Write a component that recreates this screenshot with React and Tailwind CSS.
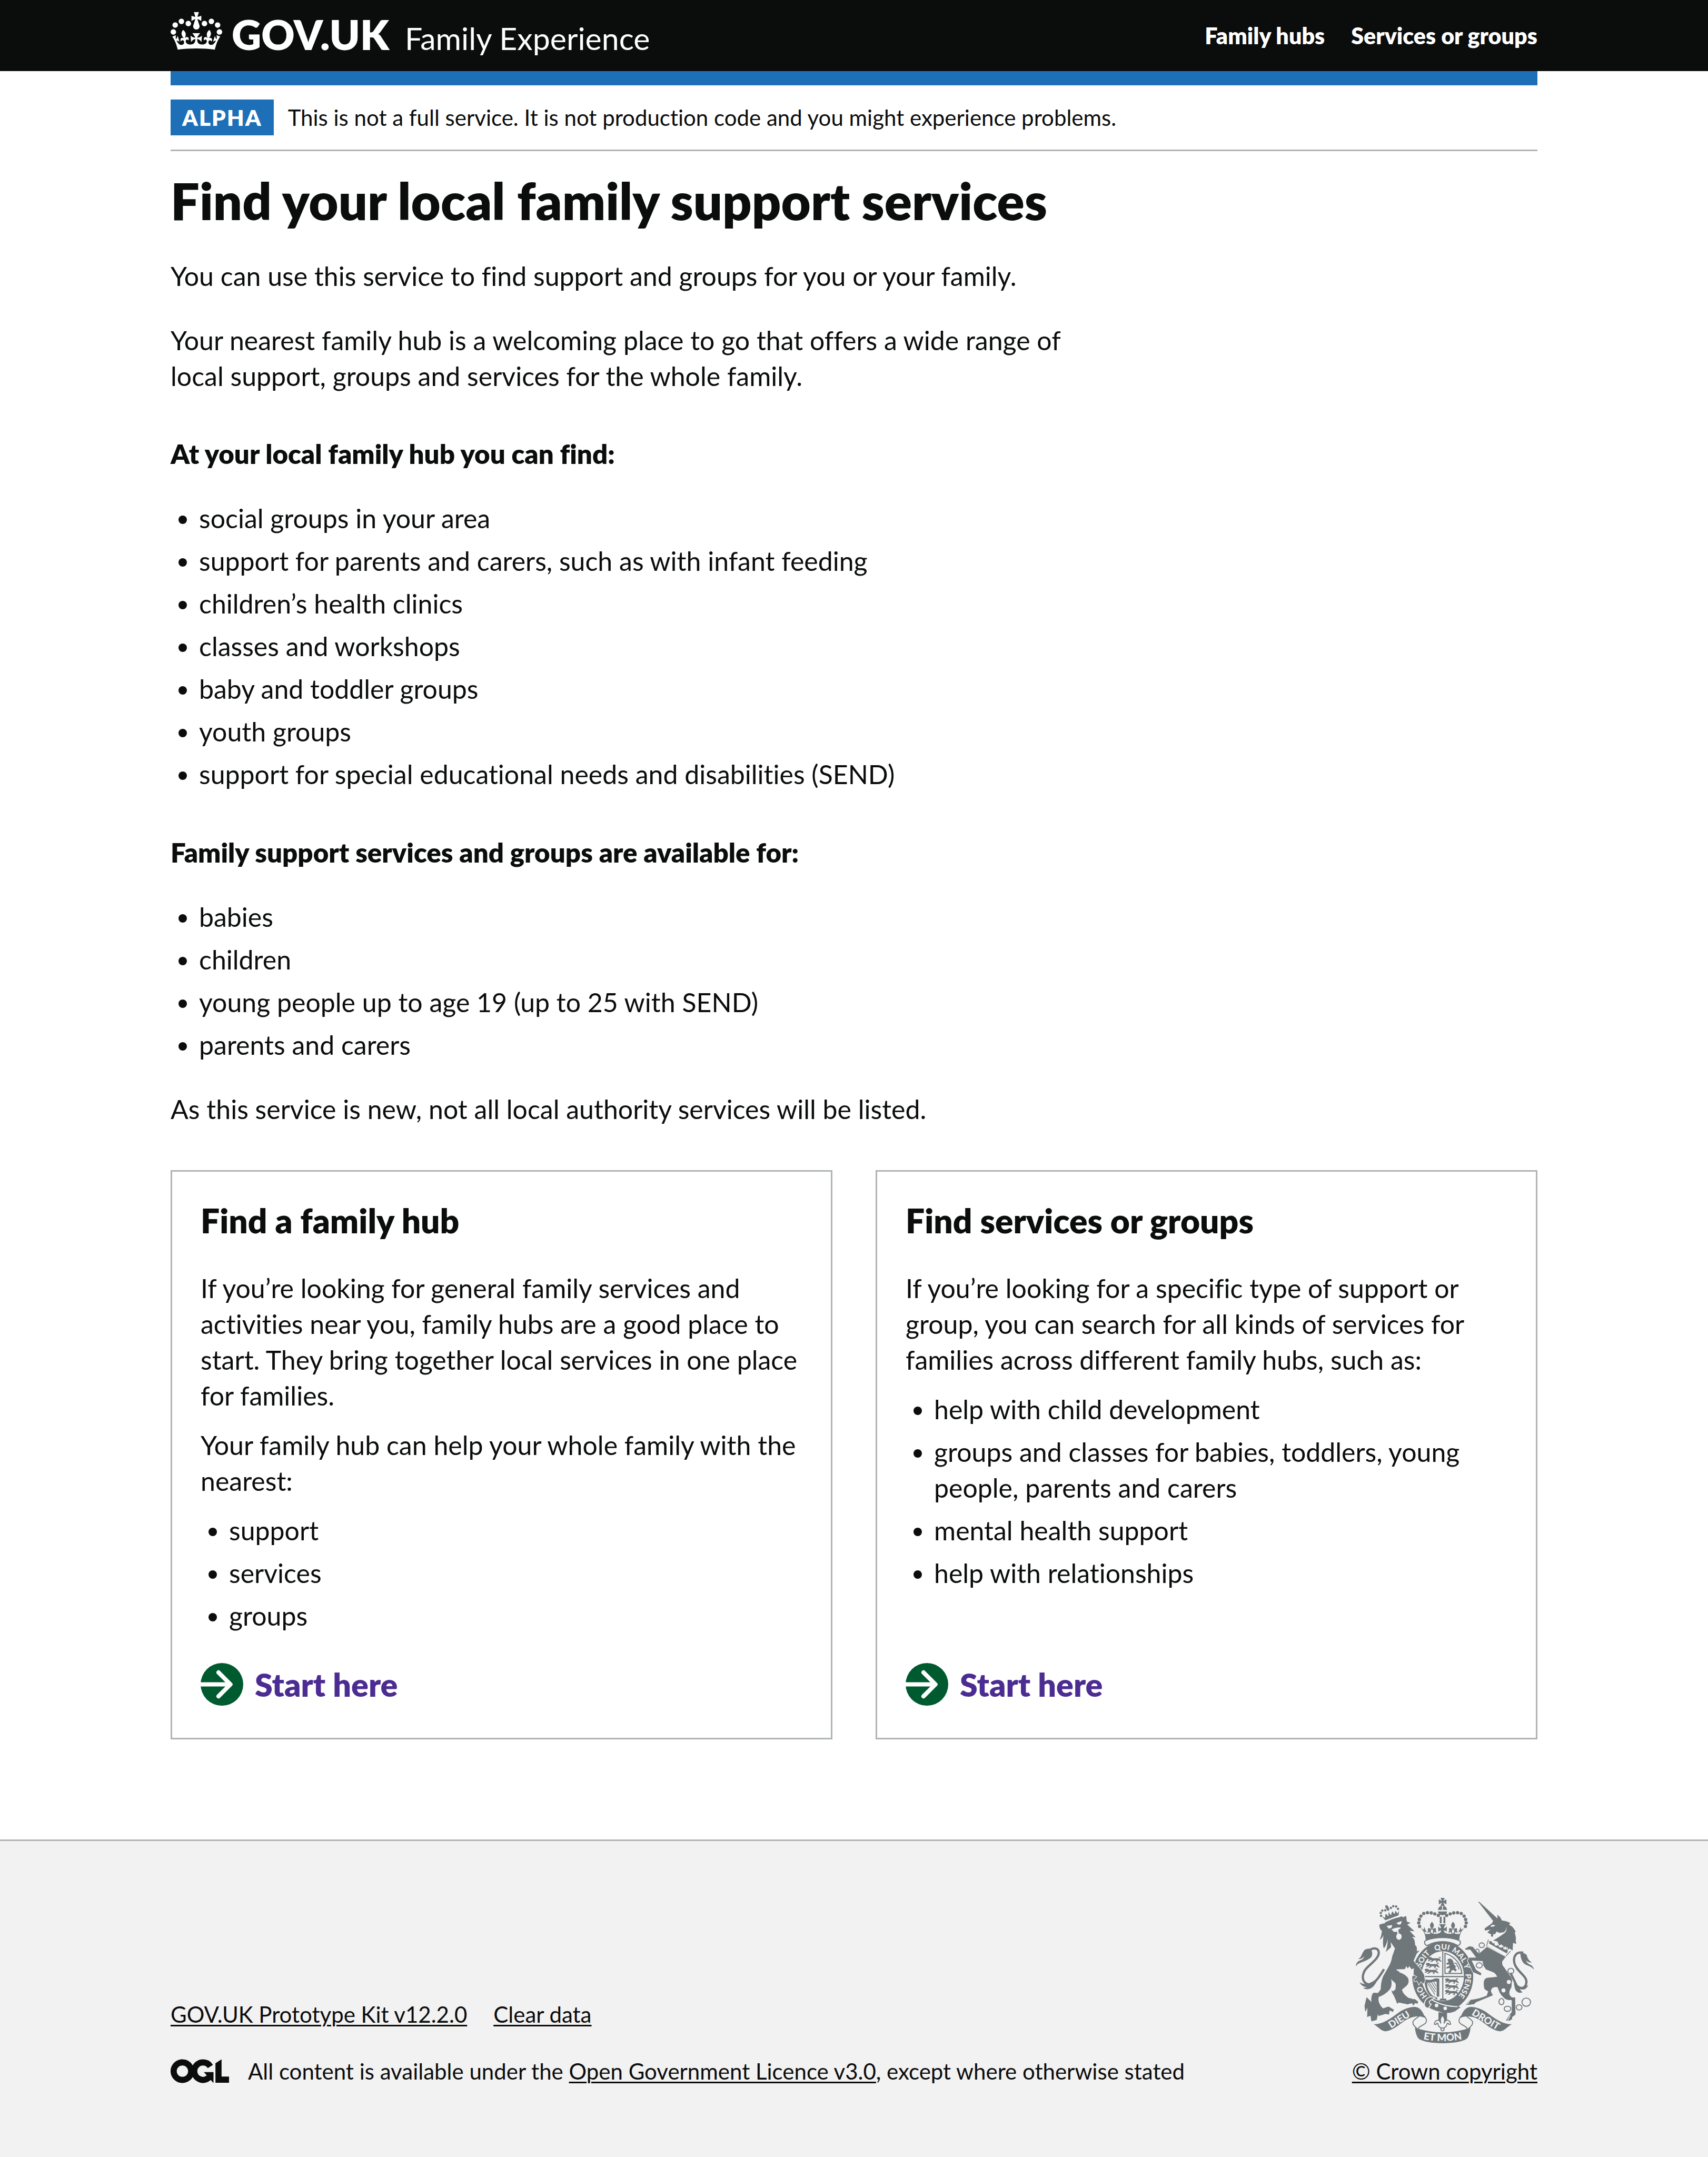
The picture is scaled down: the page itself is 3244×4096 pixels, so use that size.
const localHubItems = [
  "social groups in your area",
  "support for parents and carers, such as with infant feeding",
  "children’s health clinics",
  "classes and workshops",
  "baby and toddler groups",
  "youth groups",
  "support for special educational needs and disabilities (SEND)",
];

const audienceItems = [
  "babies",
  "children",
  "young people up to age 19 (up to 25 with SEND)",
  "parents and carers",
];

const cards = [
  {
    title: "Find a family hub",
    paragraphs: [
      "If you’re looking for general family services and activities near you, family hubs are a good place to start. They bring together local services in one place for families.",
      "Your family hub can help your whole family with the nearest:",
    ],
    items: ["support", "services", "groups"],
  },
  {
    title: "Find services or groups",
    paragraphs: [
      "If you’re looking for a specific type of support or group, you can search for all kinds of services for families across different family hubs, such as:",
    ],
    items: [
      "help with child development",
      "groups and classes for babies, toddlers, young people, parents and carers",
      "mental health support",
      "help with relationships",
    ],
  },
];

function Crown() {
  return (
    <svg viewBox="0 0 132 97" className="-mb-1 h-[72px] w-[98px] shrink-0" fill="currentColor" aria-hidden="true">
      <path
        fillRule="evenodd"
        d="M25 30.2c3.5 1.5 7.7-.2 9.1-3.7 1.5-3.6-.2-7.8-3.9-9.2-3.6-1.4-7.6.3-9.1 3.9-1.4 3.5.3 7.5 3.9 9zM9 39.5c3.6 1.5 7.8-.2 9.2-3.7 1.5-3.6-.2-7.8-3.9-9.1-3.6-1.5-7.6.2-9.1 3.8-1.4 3.5.3 7.5 3.8 9zM4.4 57.2c3.5 1.5 7.7-.2 9.1-3.8 1.5-3.6-.2-7.7-3.9-9.1-3.5-1.5-7.6.3-9.1 3.8-1.4 3.5.3 7.6 3.9 9.1zm38.3-21.4c3.5 1.5 7.7-.2 9.1-3.8 1.5-3.6-.2-7.7-3.9-9.1-3.6-1.5-7.6.3-9.1 3.8-1.3 3.6.4 7.7 3.9 9.1zm64.4-5.6c-3.6 1.5-7.8-.2-9.1-3.7-1.5-3.6.2-7.8 3.8-9.2 3.6-1.4 7.7.3 9.2 3.9 1.3 3.5-.4 7.5-3.9 9zm15.9 9.3c-3.6 1.5-7.7-.2-9.1-3.7-1.5-3.6.2-7.8 3.7-9.1 3.6-1.5 7.7.2 9.2 3.8 1.5 3.5-.3 7.5-3.8 9zm4.7 17.7c-3.6 1.5-7.8-.2-9.2-3.8-1.5-3.6.2-7.7 3.9-9.1 3.6-1.5 7.7.3 9.2 3.8 1.3 3.5-.4 7.6-3.9 9.1zM89.3 35.8c-3.6 1.5-7.8-.2-9.2-3.8-1.4-3.6.2-7.7 3.9-9.1 3.6-1.5 7.7.3 9.2 3.8 1.4 3.6-.3 7.7-3.9 9.1zM69.7 17.7l8.9 4.7V9.3l-8.9 2.8c-.2-.3-.5-.6-.9-.9L72.4 0H59.6l3.5 11.2c-.3.3-.6.5-.9.9l-8.8-2.8v13.1l8.8-4.7c.3.3.6.7.9.9l-5 15.4v.1c-.2.8-.4 1.6-.4 2.4 0 4.1 3.1 7.5 7 8.1h.2c.3 0 .7.1 1 .1.4 0 .7 0 1-.1h.2c4-.6 7.1-4.1 7.1-8.1 0-.8-.1-1.7-.4-2.4V34l-5.1-15.4c.4-.2.7-.6 1-.9zM66 92.8c16.9 0 32.8 1.1 47.1 3.2 4-16.9 8.9-26.7 14-33.5l-9.6-3.4c1 4.9 1.1 7.2 0 10.2-1.5-1.4-3-4.3-4.2-8.7L108.6 76c2.8-2 5-3.2 7.5-3.3-4.4 9.4-10 11.9-13.6 11.2-4.3-.8-6.3-4.6-5.6-7.9 1-4.7 5.7-5.9 8-.5 4.3-8.7-3-11.4-7.6-8.8 7.1-7.2 7.9-13.5 2.1-21.1-8 6.1-8.1 12.3-4.5 20.8-4.7-5.4-12.1-2.5-9.5 6.2 3.4-5.2 7.9-2 7.2 3.1-.6 4.3-6.4 7.8-13.5 7.2-10.3-.9-10.9-8-11.2-13.8 2.5-.5 7.1 1.8 11 7.3L80.2 60c-4.1 4.4-8 5.3-12.3 5.4 1.4-4.4 8-11.6 8-11.6H55.5s6.4 7.2 7.9 11.6c-4.2-.1-8-1-12.3-5.4l1.4 16.4c3.9-5.5 8.5-7.7 10.9-7.3-.3 5.8-.9 12.8-11.1 13.8-7.2.6-12.9-2.9-13.5-7.2-.7-5 3.8-8.3 7.1-3.1 2.7-8.7-4.6-11.6-9.4-6.2 3.7-8.5 3.6-14.7-4.6-20.8-5.8 7.6-5 13.9 2.2 21.1-4.7-2.6-11.9.1-7.7 8.8 2.3-5.5 7.1-4.2 8.1.5.7 3.3-1.3 7.1-5.7 7.9-3.5.7-9-1.8-13.5-11.2 2.5.1 4.7 1.3 7.5 3.3l-4.7-15.4c-1.2 4.4-2.7 7.2-4.3 8.7-1.1-3-.9-5.3 0-10.2l-9.5 3.4c5 6.9 9.9 16.7 14 33.5 14.8-2.1 30.8-3.2 47.7-3.2z"
      />
    </svg>
  );
}

function StartIcon() {
  return (
    <svg viewBox="0 0 30 30" className="size-[81px] shrink-0" aria-hidden="true">
      <circle cx="15" cy="15" r="15" fill="#005a30" />
      <path d="M0 15h20" fill="none" stroke="#fff" strokeWidth="3" />
      <path d="M12.6 6.6 21 15l-8.4 8.4" fill="none" stroke="#fff" strokeWidth="3" strokeLinecap="round" strokeLinejoin="round" />
    </svg>
  );
}

function OglLogo() {
  return (
    <svg viewBox="0 0 483.2 195.7" className="h-[46px] w-[111px] shrink-0" fill="currentColor" role="img" aria-label="Open Government Licence">
      <path d="M421.5 142.8V.1l-50.7 32.3v161.1h112.4v-50.7zm-122.3-9.6A47.12 47.12 0 0 1 221 97.8c0-26 21.1-47.1 47.1-47.1 16.7 0 31.4 8.7 39.7 21.8l42.7-27.2A97.63 97.63 0 0 0 268.1 0c-36.5 0-68.3 20.1-85.1 49.7A98 98 0 0 0 97.8 0C43.9 0 0 43.9 0 97.8s43.9 97.8 97.8 97.8c36.5 0 68.3-20.1 85.1-49.7a97.76 97.76 0 0 0 149.6 25.4l19.4 22.2h3v-87.8h-80l24.3 27.5zM97.8 145c-26 0-47.1-21.1-47.1-47.1s21.1-47.1 47.1-47.1 47.1 21.1 47.1 47.1S123.8 145 97.8 145" />
    </svg>
  );
}

const BG = "#f2f2f2";
const INK = "#6f777b";

const crownBeads = [
  [240, 183], [210, 170], [180, 162], [148, 160], [117, 167], [93, 189], [80, 217], [75, 246], [82, 276],
];

const lionBeads = [
  [235, 162], [248, 142], [273, 140], [320, 120], [340, 105], [364, 108], [380, 128], [237, 186],
];

const chainRings = [
  [1086, 434, 22, 20], [1049, 488, 15, 21], [1065, 604, 26, 22], [1331, 652, 25, 23],
  [1252, 910, 21, 26], [1303, 970, 28, 22], [1401, 958, 24, 22], [1461, 914, 36, 35],
];

function PassantLion({ x, y }) {
  return (
    <g transform={`translate(${x} ${y})`}>
      <path d="M2 16q-4-12 8-14l14-2q10 2 12 9l22 2q24-3 38 2 12 4 12 14l10 8-4 5-12-4-12-8-8 9 2 7h-16l3-6 6-6-20-4-14 6-4 7H22l3-6 9-3 2-7-14 2-12 9-8-3 2-6 12-3z" />
      <path d="M92 16q10-6 4-14 12-4 14 8" fill="none" stroke={INK} strokeWidth="5" />
    </g>
  );
}

function ScrollEnd() {
  return (
    <g>
      <path d="M175 1100C260 1102 330 1042 400 992c50-30 100-42 130-37 40 6 62 44 78 92-38-22-110-18-168 22-50 34-112 92-170 90-34-3-56-36-95-59z" />
      <g fill="none" stroke={INK} strokeWidth="8">
        <path d="M600 1030c24 26 26 50 6 66-22 18-50 20-58 46" />
        <path d="M556 1034c-14 12-34 20-48 40-10 22 6 42 30 60" />
      </g>
    </g>
  );
}

function Fleur({ x }) {
  return (
    <g transform={`translate(${x} 0)`}>
      <path d="M0 236q16 18 16 32 0 14-9 24h-14q-9-10-9-24 0-14 16-32z" />
      <path d="M-6 340q-6-16-2-30-8-22-20-20-10 6-4 20-8 8-4 24l12-14 6 8zM6 340q6-16 2-30 8-22 20-20 10 6 4 20 8 8 4 24l-12-14-6 8z" />
      <path d="M-18 294h36v9h-36z" />
    </g>
  );
}

function RoyalArms() {
  return (
    <svg viewBox="24 36 1500 1224" className="h-[276px] w-[338px] overflow-visible" fill={INK} role="img" aria-label="Royal coat of arms">
      <defs>
        <path id="garter" d="M757 922A192 226 0 0 1 757 470A192 226 0 0 1 757 922" />
        <path id="scroll" d="M560 1220Q757 1264 954 1220" />
      </defs>

      <ellipse cx="757" cy="698" rx="257" ry="294" />
      <ellipse cx="757" cy="695" rx="179" ry="210" fill={BG} />

      <g transform="translate(480 0)">
        <path d="M258 36h36l-12 26 26-14v42l-26-14 12 26h-36l12-26-26 14V48l26 14z" />
        <path d="M236 136q4-22 22-32h34q18 10 22 32zM236 150h78q-6 30-39 32-33-2-39-32z" />
        <path d="M271 104h8v32h-8z" fill={BG} />
        {crownBeads.map(([x, y]) => (
          <g key={`${x}-${y}`}>
            <circle cx={x} cy={y} r="14" />
            <circle cx={550 - x} cy={y} r="14" />
          </g>
        ))}
        <path d="M252 194h16v56h-16zM283 194h16v56h-16z" />
        <path d="M244 258h62q-16 12-19 32 14 2 24-16v48q-10-12-24-14 0 20 12 32h-48q12-12 12-32-14 2-24 14v-48q10 18 24 16-3-20-19-32z" />
        <Fleur x={186} />
        <Fleur x={364} />
        <path d="M92 290l26 14 2-24 22 46-20-8 8 20q40 6 50-10 14 14 36 10 30 0 42-14h34q12 14 42 14 22 4 36-10 10 16 50 10l8-20-20 8 22-46 2 24 26-14q-30 30-38 70l-6 46q-60-26-139-26t-139 26l-6-46q-8-40-38-70z" />
        <path d="M140 392q60-22 135-22t135 22q24 6 12 34-10 14-24 8-56-30-123-30t-123 30q-14 6-24-8-12-28 12-34z" fill={BG} stroke={INK} strokeWidth="9" />
      </g>

      <g fontFamily="Lato, sans-serif" fontWeight="900" fontSize="64" fill={BG} textAnchor="middle">
        <text><textPath href="#garter" startOffset="15%">HO</textPath></text>
        <text><textPath href="#garter" startOffset="36%">SOIT</textPath></text>
        <text><textPath href="#garter" startOffset="49.5%">QUI</textPath></text>
        <text><textPath href="#garter" startOffset="61%">MAL</textPath></text>
        <text><textPath href="#garter" startOffset="69%">Y</textPath></text>
        <text><textPath href="#garter" startOffset="81%">PENSE</textPath></text>
      </g>

      <g>
        <path d="M579 694h356v9H579zM753 486h9v410h-9z" />
        <PassantLion x={630} y={534} />
        <PassantLion x={614} y={583} />
        <PassantLion x={604} y={632} />
        <PassantLion x={776} y={714} />
        <PassantLion x={776} y={762} />
        <PassantLion x={776} y={810} />
        <path d="M776 502v170h142q-4-50-36-98-40-52-106-72z" fill="none" stroke={INK} strokeWidth="9" />
        <path d="M796 556l16-10 20 6 12 14 6 28 18 20-6 14 14 16-12 12-16-14-18 6-4 18h-22l6-16 10-12-8-12-24 6 2-14 20-8 4-14-22 2-6-12 20-8z" />
        <path d="M852 586q28-4 26 22 16 8 14 32" fill="none" stroke={INK} strokeWidth="7" />
        <path d="M602 718q36 16 70 4 30-14 56-4v150h-22V742q-18-6-40 4-24 8-42 2 0 50 28 90 20 28 60 40v14q-50-12-80-54-30-50-30-120z" />
        <path d="M628 752l64 100M644 752l52 76M662 746l38 60M680 742l22 38" fill="none" stroke={INK} strokeWidth="6" />
        <path d="M738 884h44l12 18h-68z" />
      </g>

      <path d="M632 918q30 30 120 44 76 12 128-14l28 8-48 36q-60 26-140 0-60-18-90-46z" />
      <path d="M660 890q90 58 222 62" fill="none" stroke={BG} strokeWidth="9" />
      <path d="M690 880q-30-22-62 0-28 22-26 60 8 28 36 24l22-34q-20 0-16-22 20-20 46-28z" fill={INK} stroke={BG} strokeWidth="8" />
      <circle cx="705" cy="942" r="15" fill={BG} />
      <circle cx="778" cy="966" r="15" fill={BG} />
      <g stroke={INK} strokeWidth="8">
        <path d="M725 1004l64 4v60h-64z" />
        <path d="M755 1026q18 20 18 40l-4 28q8-26 24-28 28 2 30 34l-14 2q-4-14-14-10-4 28-26 38l-4 16h-20l-4-16q-22-10-26-38-10-4-14 10l-14-2q2-32 30-34 16 2 24 28l-4-28q0-20 18-40z" fill={BG} />
        <circle cx="755" cy="1144" r="13" fill={BG} />
      </g>

      <g>
        <path d="M245 190l28 34 112-42 4-40-14 26-16-26-8 30-20-24-10 34-22-28 2 38-26-24-4 36z" />
        <path d="M276 96l18 6 6 14 8 20-10 10-12-10-6-14-8-6z" />
        {lionBeads.map(([x, y]) => (
          <circle key={`${x}-${y}`} cx={x} cy={y} r="10" />
        ))}
        <path
          stroke={BG}
          strokeWidth="5"
          d="M222 270l40-14 8-16q60-32 120-44l20-8 12 8 30-12 4 48 36 14-30 14 64 60-42-4 52 56-34-6q24 12 24 64l14 18 2 34 28-8-30 32-26 60 60 70 28 46 8 56-20 26-16-22-18 28-16-34-24 6-4-18 26-24-36-22-16-50-18 16-62 6-14 10q58 20 76 52 14 40-16 68l-36 30q10 34 46 60 26 24 58 14l32 24-4 22-28-6-12 24-12-24-34 12-50-12-26-4-14 12-26-68-20-32 30-28 2-24q2-30-14-34l-18-18q10 50-16 84-40 44-90 60-10 50 34 92l46-16 48 28-8 24-28-12-6 34-30-6-62 18-12-44-26 10-2-46-16-8-6-50q0-40 18-64l40 2 22-28q0-60 20-110l42-74q30-50 34-92l24-68z"
        />
        <path d="M222 262q20-10 44-12l44 50 12 150-46 42q16-40 18-112-12 60-34 82-12-40-2-112-12 30-32 38 16-34 18-76-20-10-22-50z" />
        <path d="M115 872l-17 74 6 50 18-34-2 78 28-12 8 48 44-12 20-90zM322 812l22 44 20 42 8-34 24 44 22 18 4-26 38 26 42-2 8 18 20-28-34-30-90-20z" />
        <path d="M372 648l-6-10 72-2 12-26 12 20 14-20 16 28 22-10-4 70-60-20z" fill={BG} />
        <g fill={BG}>
          <path d="M283 272l48-8-5 22-22 9zM365 248l46-18-5 25-20 7zM325 302q30-18 76-18v10l-15 6-5 22h-36l-9-10z" />
          <ellipse cx="388" cy="362" rx="23" ry="27" />
          <path d="M374 320h12v26h-12z" />
        </g>
        <path d="M262 636C190 756 160 768 128 764 84 750 70 706 98 650 130 598 218 556 218 496c-2-34-30-44-70-26" fill="none" stroke={INK} strokeWidth="19" />
        <path d="M150 464q-30-6-52 10-16 20-26 46-8 20-26 30 26 4 50-22-4 22-34 34-36 12-38 52 12-24 44-34 60-20 86-44 20-32-4-72zM55 745q22 18 55 16 60-6 122-76l-46 80q-26 40-66 40-20 0-36-12 20 2 34-4-46-6-63-44z" />
      </g>

      <g>
        <path d="M1056 68h8l160 146-36 24z" />
        <path d="M1183 234l35-22v-36l26 26 12 24q40 2 72 22l-13 13q30 14 40 32 10 16 17 24l-8 14q14 40 8 66l6 26-28-8-4 64-24-16-18 10-18-30-16 14-16-30-22 10-14-34-36-8q60-34 100-66 16-14 12-50-2 50-40 48-24 8-42-8l-16 24-12-4-4 24-18-4 4-16-34-16 26-24-46 8-2-18 60-42q10-24 27-27z" />
        <path d="M1162 270q22-16 38 0-18 12-38 8zM1100 338l44-16-32 20z" fill={BG} />
        <path d="M1142 386l-16 56 160 88 42-46" fill="none" stroke={INK} strokeWidth="6" />
        <path d="M1146 396l26 4 8 16 14-4 4 22 18 2 10-12 8 24 20 4 10-12 8 26 22 2 8-14 6 36-12 16-150-84z" stroke={BG} strokeWidth="5" />
        <path
          stroke={BG}
          strokeWidth="5"
          d="M1129 445l163 86-31 40q-4 30 14 46l40 58q30 34 29 57l-6 58q-20 30-17 57 10 22 23 25h26l3 147-29 23v18l-29 14-29-4 29-45 21-29v-97q-34 2-55-12-30-22-46-52l-18-45q-50-6-51 34l17 34-143 58-18 17-40 6-34-1 34-45q80-6 144-35l11-34q-34-14-34-34-6-34 0-58 8-20 28-25l81-9q-10-24-35-35l-57-23-23-34-6-35-86-5 35 74 45 29-5 23-69-29-46-97 11-29 58-1-46-62-40 1-6-12 40-23 29 6 51 57z"
        />
        <path d="M990 892l-26 40M1326 1024l-22 44" stroke={BG} strokeWidth="6" />
        <circle cx="1314" cy="744" r="17" fill={BG} />
        <circle cx="1269" cy="815" r="17" fill={BG} />
        <path d="M1328 668l52 106c40 40 76 18 82-24 8-60-84-92-102-168-10-60 20-96 76-84" fill="none" stroke={INK} strokeWidth="19" />
        <path d="M1412 500q34-4 52 16 8 30 22 46l22 20-30-6q-16-8-20-16 6 24 34 38 30 12 34 42-18-22-50-34-40-12-52-44-14-34-12-62zM1356 740l24 36q40 12 60 10 24-6 38-18-10 34-40 40l-30-2q10 20 24 24-34 14-56-10-16-20-20-80z" />
        <g fill="none" stroke={INK} strokeWidth="8">
          {chainRings.map(([cx, cy, rx, ry]) => (
            <ellipse key={`${cx}-${cy}`} cx={cx} cy={cy} rx={rx} ry={ry} />
          ))}
        </g>
      </g>

      <ScrollEnd />
      <g transform="matrix(-1 0 0 1 1514 0)">
        <ScrollEnd />
      </g>
      <path d="M522 1128q110 40 235 40t235-40q-10 74-34 96-60 36-201 36t-201-36q-24-22-34-96z" />
      <g fontFamily="Lato, sans-serif" fontWeight="900" fill={BG} textAnchor="middle">
        <text fontSize="84"><textPath href="#scroll" startOffset="50%">ET MON</textPath></text>
        <text fontSize="82" transform="translate(404 1084) rotate(-32)">DIEU</text>
        <text fontSize="82" transform="translate(1106 1084) rotate(31)">DROIT</text>
      </g>
    </svg>
  );
}

function BulletList({ items }) {
  return (
    <ul className="flex list-disc flex-col gap-[13px] pl-[54px]">
      {items.map((item) => (
        <li key={item}>{item}</li>
      ))}
    </ul>
  );
}

function Card({ title, paragraphs, items }) {
  return (
    <section className="flex flex-col border-3 border-[#b1b4b6] pt-[52px] pr-[44px] pb-[61px] pl-[54px]">
      <h2 className="mb-[54px] text-[64px] leading-[81px] font-extrabold">{title}</h2>
      <div className="flex flex-col gap-[26px]">
        {paragraphs.map((text) => (
          <p key={text}>{text}</p>
        ))}
        <BulletList items={items} />
      </div>
      <div className="mt-auto pt-[56px]">
        <a href="#start" className="inline-flex items-center gap-[22px] align-top text-[61px] leading-[81px] font-extrabold text-[#4c2c92]">
          <StartIcon />
          Start here
        </a>
      </div>
    </section>
  );
}

const container = "mx-auto w-full max-w-[2596px]";
const footerLink = "underline decoration-3 underline-offset-4";

export default function App() {
  return (
    <div className="flex min-h-screen flex-col bg-white font-['Lato',sans-serif] text-[50px] leading-[68px] text-[#0b0c0c] [font-variant-ligatures:none]">
      <header className="bg-[#0b0c0c] text-white">
        <div className={`${container} flex h-[135px] items-center justify-between`}>
          <div className="flex items-baseline gap-[30px]">
            <a href="#home" className="flex items-baseline gap-[18px] text-[78px] leading-[81px] font-extrabold">
              <Crown />
              GOV.UK
            </a>
            <a href="#service" className="text-[59px] leading-[81px]">Family Experience</a>
          </div>
          <nav className="flex gap-[50px] text-[43px] leading-[54px] font-extrabold">
            <a href="#family-hubs">Family hubs</a>
            <a href="#services">Services or groups</a>
          </nav>
        </div>
      </header>

      <div className={container}>
        <div className="h-[27px] bg-[#1d70b8]" />
        <div className="flex items-center gap-[27px] border-b-3 border-[#b1b4b6] py-[27px] text-[42px] leading-[68px]">
          <strong className="bg-[#1d70b8] px-[22px] text-[42px] font-extrabold tracking-wider text-white">ALPHA</strong>
          <span>This is not a full service. It is not production code and you might experience problems.</span>
        </div>
      </div>

      <main className={`${container} pt-[41px] pb-[190px]`}>
        <div className="max-w-[1730px]">
          <h1 className="mb-14 text-[97px] leading-[106px] font-extrabold whitespace-nowrap">Find your local family support services</h1>
          <p className="mb-[54px]">You can use this service to find support and groups for you or your family.</p>
          <p className="mb-[80px]">
            Your nearest family hub is a welcoming place to go that offers a wide range of local support, groups and services for the whole family.
          </p>
          <h2 className="mb-[54px] text-[51px] font-extrabold">At your local family hub you can find:</h2>
          <BulletList items={localHubItems} />
          <h2 className="mt-[81px] mb-[54px] text-[51px] font-extrabold">Family support services and groups are available for:</h2>
          <BulletList items={audienceItems} />
          <p className="mt-[54px]">As this service is new, not all local authority services will be listed.</p>
        </div>
        <div className="mt-[82px] grid grid-cols-2 gap-[82px]">
          {cards.map((card) => (
            <Card key={card.title} {...card} />
          ))}
        </div>
      </main>

      <footer className="grow border-t-3 border-[#b1b4b6] bg-[#f2f2f2] pt-[108px] pb-[135px] text-[42px] leading-[54px]">
        <div className={`${container} flex items-end justify-between`}>
          <div className="flex flex-col gap-[54px]">
            <div className="flex gap-[50px]">
              <a href="#kit" className={footerLink}>GOV.UK Prototype Kit v12.2.0</a>
              <a href="#clear" className={footerLink}>Clear data</a>
            </div>
            <div className="flex items-center gap-[36px]">
              <OglLogo />
              <p>
                All content is available under the <a href="#licence" className={footerLink}>Open Government Licence v3.0</a>, except where otherwise stated
              </p>
            </div>
          </div>
          <a href="#copyright" className="flex flex-col items-center gap-[26px]">
            <RoyalArms />
            <span className={footerLink}>© Crown copyright</span>
          </a>
        </div>
      </footer>
    </div>
  );
}
